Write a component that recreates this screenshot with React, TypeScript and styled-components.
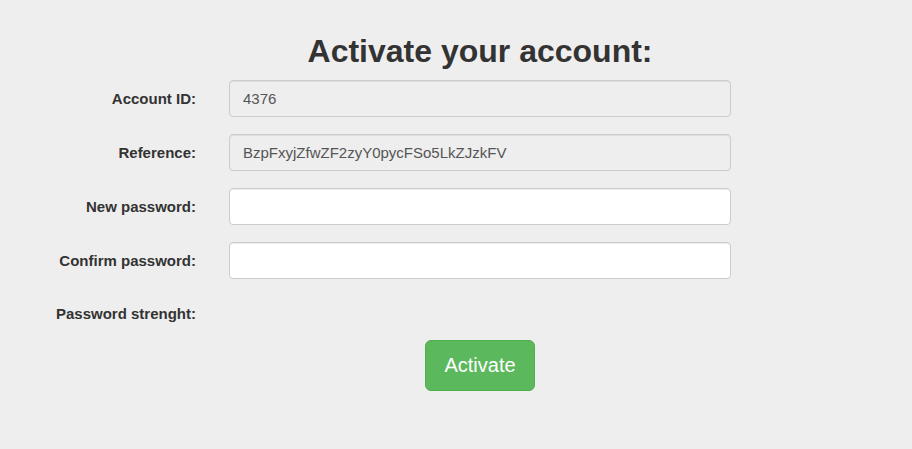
import * as React from 'react';
import styled, { createGlobalStyle } from 'styled-components';

const GlobalStyle = createGlobalStyle`
  html, body {
    margin: 0;
    padding: 0;
    background: #eeeeee;
    font-family: "Liberation Sans", Arial, Helvetica, sans-serif;
    color: #333333;
  }
`;

const Page = styled.main`
  width: 912px;
  height: 449px;
  padding-top: 31px;
  box-sizing: border-box;
`;

const Title = styled.h1`
  margin: 0 0 9px 0;
  padding-left: 229px;
  width: 502px;
  text-align: center;
  font-size: 32px;
  line-height: 40px;
  font-weight: bold;
  color: #333333;
`;

const Form = styled.form`
  display: grid;
  grid-template-columns: 196px 502px;
  column-gap: 33px;
  row-gap: 17px;
  align-items: center;
`;

const Label = styled.label`
  text-align: right;
  font-size: 15px;
  font-weight: bold;
  color: #333333;
`;

const Input = styled.input<{ $readOnly?: boolean }>`
  box-sizing: border-box;
  height: 37px;
  width: 100%;
  padding: 0 13px;
  font-family: "Liberation Sans", Arial, Helvetica, sans-serif;
  font-size: 15px;
  color: #555555;
  border: 1px solid #cccccc;
  border-radius: 4px;
  background: ${(p) => (p.$readOnly ? '#eeeeee' : '#ffffff')};
  box-shadow: inset 0 1px 1px rgba(0, 0, 0, 0.075);
  outline: none;
`;

const StrengthSlot = styled.div`
  height: 34px;
`;

const Actions = styled.div`
  display: flex;
  justify-content: center;
  padding-left: 229px;
  width: 502px;
  margin-top: 10px;
`;

const Button = styled.button`
  height: 51px;
  padding: 0 18px;
  background: #5cb85c;
  border: 1px solid #4cae4c;
  border-radius: 6px;
  color: #ffffff;
  font-family: "Liberation Sans", Arial, Helvetica, sans-serif;
  font-size: 20px;
  cursor: pointer;
`;

const fields = [
  { label: 'Account ID:', value: '4376', readOnly: true, type: 'text' },
  { label: 'Reference:', value: 'BzpFxyjZfwZF2zyY0pycFSo5LkZJzkFV', readOnly: true, type: 'text' },
  { label: 'New password:', value: '', readOnly: false, type: 'password' },
  { label: 'Confirm password:', value: '', readOnly: false, type: 'password' },
];

export default function App() {
  return (
    <>
      <GlobalStyle />
      <Page>
        <Title>Activate your account:</Title>
        <Form onSubmit={(e) => e.preventDefault()}>
          {fields.map((f) => (
            <React.Fragment key={f.label}>
              <Label>{f.label}</Label>
              <Input type={f.type} defaultValue={f.value} readOnly={f.readOnly} $readOnly={f.readOnly} />
            </React.Fragment>
          ))}
          <Label>Password strenght:</Label>
          <StrengthSlot />
        </Form>
        <Actions>
          <Button type="button">Activate</Button>
        </Actions>
      </Page>
    </>
  );
}
